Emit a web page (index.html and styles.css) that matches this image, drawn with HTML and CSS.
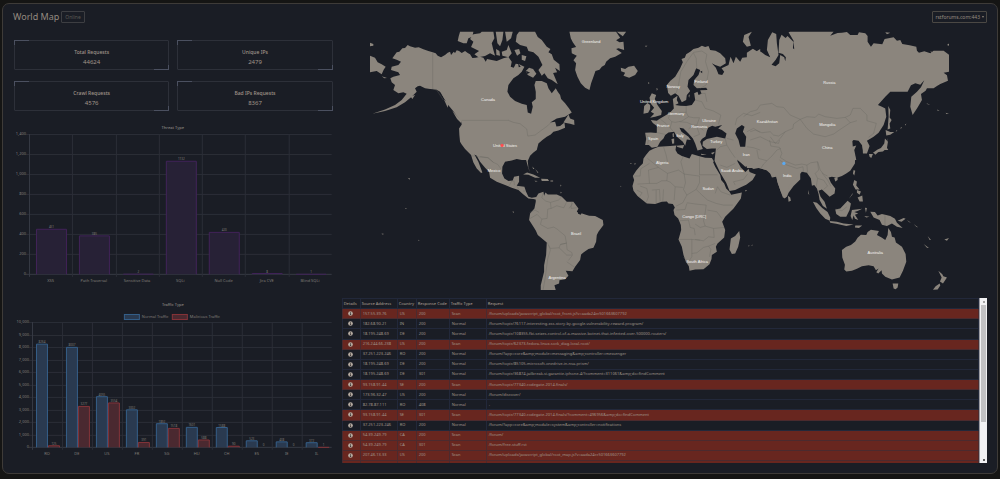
FILE: index.html
```html
<!DOCTYPE html>
<html lang="en">
<head>
<meta charset="utf-8">
<title>World Map</title>
<meta name="viewport" content="width=device-width, initial-scale=1">
<link rel="stylesheet" href="styles.css">
<script src="charts.js" defer></script>
</head>
<body>
<svg class="sprite" aria-hidden="true">
  <symbol id="info" viewBox="0 0 16 16"><circle cx="8" cy="8" r="7.5" fill="currentColor"/><path class="info-mark" d="M6.4 7H9v4.2h1.2v1.5H6v-1.5h1V8.4H6.400zM7 3.300h2.200v2.200H7z"/></symbol>
</svg>
<main class="panel">
  <header class="header">
    <h1 class="title">World Map</h1>
    <span class="status">Online</span>
    <button class="host" type="button" aria-haspopup="listbox">rstforums.com:443<span class="caret" aria-hidden="true"></span></button>
  </header>
  <div class="layout">
    <div class="left">
      <section class="stats">
        <article class="stat"><h2 class="stat-name">Total Requests</h2><p class="stat-value">44624</p></article>
        <article class="stat"><h2 class="stat-name">Unique IPs</h2><p class="stat-value">2479</p></article>
        <article class="stat"><h2 class="stat-name">Crawl Requests</h2><p class="stat-value">4576</p></article>
        <article class="stat"><h2 class="stat-name">Bad IPs Requests</h2><p class="stat-value">8367</p></article>
      </section>
      <svg class="chart" id="threat-chart" viewBox="0 0 323 175" role="img" aria-label="Threat Type"></svg>
      <svg class="chart" id="traffic-chart" viewBox="0 0 323 175" role="img" aria-label="Traffic Type"></svg>
    </div>
    <div class="right">
      <svg class="map" viewBox="1110 93 1737 777" role="img" aria-label="Requests by country">
        <g class="land">
          <g transform="translate(1095 75)">
            <path d="M82,100L95,82 103,80 112,70 120,69 128,60 135,64 150,68 161,67 175,73 190,78 203,82 212,85 218,92 228,97 240,90 248,83 255,80 258,90 266,80 270,84 275,76 282,78 290,84 300,78 308,84 315,88 322,99 332,98 345,95 355,98 362,110 366,102 380,105 395,108 415,100 430,96 440,110 437,125 446,128 452,116 462,118 478,125 470,140 460,150 445,160 430,180 427,200 435,215 450,228 470,236 485,240 488,262 498,266 503,245 500,232 512,222 512,200 508,180 512,168 530,168 545,175 550,190 560,205 572,190 578,200 585,210 588,222 600,235 612,250 620,262 600,275 575,280 555,292 570,290 574,304 585,303 598,292 600,308 580,316 565,320 557,328 545,335 532,345 520,355 515,375 505,382 495,392 488,408 490,428 496,443 490,430 483,405 470,405 455,402 440,406 420,410 412,425 411,445 418,460 430,468 443,466 447,455 462,452 462,470 455,482 478,485 483,500 490,515 500,518 514,516 514,524 505,522 490,520 475,508 460,495 440,488 420,480 395,470 375,458 372,440 360,428 345,410 335,392 328,388 340,410 352,442 348,444 335,430 325,412 318,390 300,372 290,358 285,350 283,330 282,310 290,298 288,288 275,272 262,255 245,235 235,215 225,200 215,194 205,193 195,192 180,190 165,182 158,184 150,190 155,200 140,215 120,232 95,247 60,258 22,266 60,253 90,240 110,225 125,206 115,202 100,205 85,195 90,180 80,172 76,160 85,155 105,150 100,142 78,135 80,125 100,120 108,110 95,104Z"/>
            <path d="M285,20L325,20 322,35 310,40 305,55 295,55 278,48 281,34ZM325,28L345,25 350,20 385,20 388,40 380,55 385,75 390,92 375,85 360,93 340,97 328,88 342,78 330,72 318,66 325,50 315,42ZM392,20L415,20 412,45 405,64 397,55ZM420,20L443,20 438,40 425,50ZM410,80L425,75 430,60 440,85 430,97 412,92ZM393,72L403,78 405,92 394,90ZM462,20L510,20 518,36 530,45 545,65 556,72 550,82 560,88 566,104 583,118 584,138 570,128 576,142 564,144 578,178 560,165 548,160 538,145 530,152 520,135 532,120 520,95 505,82 490,78 485,65 465,60 452,50 455,30ZM482,138L492,128 504,132 514,146 504,158 488,150ZM448,75L462,72 466,85 456,92ZM470,90L484,94 480,108 470,104Z"/>
            <path d="M15,92L30,98 38,112 50,118 62,125 56,134 50,148 35,138 15,142ZM15,53L25,57 25,62 15,64ZM50,154L66,159 58,160ZM136,214L150,210 142,222ZM228,204L242,218 238,222ZM236,222L250,236 248,248ZM262,258L290,286 288,294 276,282Z"/>
          </g>
          <g transform="translate(1095 465)">
            <path d="M512,128L520,115 535,110 537,122 541,112 548,118 575,118 590,125 605,140 625,140 640,160 635,170 660,178 672,182 690,183 713,195 715,210 700,230 695,240 693,260 685,278 670,282 655,292 648,298 645,315 630,335 622,348 602,347 610,362 600,372 583,375 582,385 568,390 572,405 527,405 527,390 531,374 537,350 537,330 543,300 545,262 518,240 512,226 505,215 492,195 495,175 508,160 512,140Z"/>
            <path d="M474,58L486,52 505,58 525,68 510,68 490,59ZM528,71L548,72 552,78 530,78ZM508,77L518,78 512,80ZM556,76L564,76 564,79 556,79ZM128,68L135,70 134,74ZM442,169L447,170 445,174ZM50,235L58,237 51,238ZM160,254L164,256 160,257ZM120,159L126,160 122,162ZM502,34L508,42 504,42ZM510,42L520,52 518,54ZM586,88L589,92 586,94ZM586,110L590,112 587,115Z"/>
          </g>
          <g transform="translate(1680 75)">
            <path d="M28,20L168,20 180,38 168,46 178,52 190,50 192,75 175,70 168,72 185,84 165,95 150,100 138,110 134,120 125,125 118,134 106,138 100,155 93,175 88,195 75,188 62,175 52,155 45,135 48,115 40,106 50,92 35,85 34,70 48,66 38,52 32,40ZM170,20L198,20 188,34ZM182,128L195,132 205,125 222,122 233,138 225,150 207,158 190,152 195,143 183,139ZM10,292L25,268 30,280 42,285 43,300 30,296ZM255,62L262,62 257,66ZM264,171L268,174 265,178ZM289,188L293,192 290,197Z"/>
            <path d="M275,205L288,210 284,222 292,240 305,258 303,270 285,275 270,278 282,266 272,260 282,248 272,236 268,218ZM252,243L262,234 270,240 270,252 264,263 250,266Z"/>
            <path d="M255,323L272,322 290,324 290,303 278,294 272,285 290,287 300,280 318,270 330,262 341,250 338,222 352,212 350,225 355,235 345,240 360,242 378,243 395,240 405,225 402,205 412,200 415,210 424,206 420,196 442,195 438,188 410,190 400,180 402,165 415,150 420,135 408,130 400,150 385,165 382,185 390,198 380,210 378,225 365,232 355,212 345,205 332,212 324,204 320,180 330,168 345,155 360,130 368,112 364,102 374,98 378,88 390,80 400,72 415,68 425,62 435,66 445,63 450,75 466,77 480,85 495,100 497,115 480,125 465,120 455,115 467,128 475,148 486,150 492,140 484,130 505,120 511,95 520,115 527,95 540,110 546,98 560,97 575,88 600,72 600,370 468,370 455,370 440,372 427,362 428,350 440,342 470,335 495,340 499,325 485,315 474,310 486,300 465,305 456,302 444,308 440,318 436,334 425,342 420,350 428,372 412,376 405,355 398,340 385,325 370,310 358,308 364,320 385,335 392,345 380,343 375,362 368,350 350,335 342,320 325,322 315,330 310,340 300,350 292,365 275,368 266,360 255,360 258,342Z"/>
            <path d="M348,362L372,360 368,370 352,366ZM334,342L342,340 342,355 336,356ZM337,326L341,324 341,336 338,336ZM422,386L440,388 424,390ZM452,384L464,380 458,388ZM552,30L575,20 565,36 572,62 560,65 548,50ZM385,212L389,208 387,218Z"/>
          </g>
          <g transform="translate(1860 450)">
            <path d="M78,14L88,2 100,-4 115,-10 150,-12 168,-14 166,0 172,10 185,18 208,25 215,12 235,18 255,23 275,24 282,35 278,34 285,50 300,75 303,90 312,100 318,115 328,125 333,134 365,127 362,145 340,175 315,200 306,215 315,240 312,262 292,280 287,290 290,305 275,315 274,327 268,342 250,357 225,358 208,362 206,348 197,335 190,315 185,290 175,268 183,240 182,225 174,205 163,195 160,180 164,172 158,162 145,160 140,154 125,155 105,162 80,160 65,148 52,138 40,122 37,108 42,90 38,78 48,62 60,48 68,40 70,25Z"/>
            <path d="M357,243L360,262 354,290 345,310 335,312 328,298 332,265 345,258Z"/>
            <path d="M283,32L288,-12 350,-12 352,34 362,52 376,66 385,56 388,66 407,73 397,90 378,104 360,112 345,120 328,123 318,98 300,68Z"/>
            <path d="M345,-12L540,-12 540,88 520,108 505,128 500,140 492,145 482,125 472,98 468,80 455,82 450,70 438,60 415,54 400,57 385,48 375,50 362,38 350,28ZM503,137L510,142 512,152 505,155ZM375,120L381,121 376,124ZM384,286L389,287 385,289ZM394,285L398,284 395,288ZM30,39L36,42 31,42ZM42,40L48,40 44,44ZM1,107L4,109 1,110Z"/>
          </g>
          <g transform="translate(2250 0)">
            <path d="M-10,158L8,146 20,154 32,155 45,165 60,172 50,150 53,120 66,97 78,102 80,130 85,165 76,180 64,194 76,199 87,190 90,165 102,172 105,184 107,172 98,162 85,158 87,120 94,104 106,114 112,108 130,126 128,145 132,148 130,122 115,97 120,95 250,95 240,107 262,99 275,98 290,96 300,105 322,105 326,97 345,100 352,108 352,125 362,140 370,130 396,133 403,117 430,112 440,122 450,120 456,132 478,136 498,140 500,152 506,158 522,154 540,160 550,152 580,152 597,165 597,215 580,218 590,226 593,242 570,252 560,258 550,265 530,265 526,272 512,282 515,300 500,325 487,345 480,320 483,290 500,275 512,262 522,241 510,254 495,250 482,256 472,275 420,275 405,290 383,315 395,320 405,325 408,350 400,375 385,398 370,410 350,422 358,438 350,460 338,460 337,438 325,422 310,420 297,430 305,440 318,436 312,450 318,480 -10,480ZM414,318L420,330 418,352 424,360 418,370 420,385 412,388 415,350ZM406,390L420,396 432,396 420,404 408,406ZM405,97L420,98 410,103ZM426,118L440,122 432,126ZM590,135L597,130 597,138ZM540,154L552,158 551,168ZM412,414L408,440 414,450 402,450ZM436,394L440,390 441,393ZM450,384L456,380 452,386ZM464,374L468,370 466,376ZM528,309L540,315 532,313ZM560,328L568,332 562,332ZM586,338L597,342 588,342Z"/>
          </g>
          <g transform="translate(2220 420)">
            <path d="M20,84L20,0 336,0 338,24 332,32 345,50 344,70 330,92 318,100 305,108 290,113 275,110 265,112 272,128 285,145 283,160 268,170 258,160 245,148 235,152 241,170 253,185 260,206 248,198 238,180 235,162 230,145 222,135 215,137 212,115 200,98 185,95 170,112 155,126 145,140 142,160 135,174 128,172 120,150 112,125 108,106 98,110 85,92 60,84ZM365,0L380,4 382,30 370,38 366,20ZM434,-5L443,5 440,24 428,34 415,36 405,42 398,38 412,28 422,24 432,10ZM386,42L398,42 393,54 388,50ZM400,38L412,38 405,44ZM340,90L345,92 342,106 338,100ZM282,114L292,111 292,120 285,124ZM342,120L350,124 348,136 358,148 346,148 338,134ZM350,150L362,154 358,164 350,158ZM352,172L366,166 368,184 358,184ZM338,158L326,176 336,164Z"/>
            <path d="M218,185L230,188 246,204 262,216 270,232 269,242 255,236 240,220 228,204ZM268,243L290,245 310,250 340,253 318,258 288,251 270,248ZM345,256L366,256 356,264 344,262ZM285,208L300,205 322,182 332,190 328,210 318,230 300,230 288,222ZM335,210L366,206 352,213 342,216 354,220 344,224 354,240 344,236 340,226 336,240 331,228ZM374,203L380,204 377,218ZM372,228L388,230 378,232ZM390,215L404,216 412,226 425,222 450,228 464,236 470,248 487,264 470,260 455,250 440,258 425,254 418,240 400,232ZM472,242L490,234 496,236 484,245ZM500,240L512,248 506,246ZM520,252L534,262 528,260ZM550,312L566,324 560,323ZM612,298L626,294 620,302ZM562,288L572,300 568,300ZM205,150L207,165 204,160Z"/>
            <path d="M305,330L318,320 332,315 345,304 352,293 362,284 378,285 382,276 392,269 416,273 410,285 424,292 435,300 442,285 444,264 452,276 455,290 463,292 467,307 485,320 496,342 498,365 488,392 478,412 455,418 435,410 425,400 424,390 414,400 408,396 415,385 407,390 400,378 385,375 365,378 350,386 335,392 318,394 312,388 314,374 306,352ZM457,430L474,430 472,442 466,447 460,445ZM594,392L606,402 609,408 620,412 608,430 599,424 604,412ZM598,430L600,436 592,448 578,449 586,438Z"/>
          </g>
        </g>
        <g class="water">
          <path d="M2210,385L2225,375 2233,380 2228,395 2238,410 2235,440 2220,440 2215,420 2205,400ZM1588,316L1596,316 1582,327ZM1554,190L1562,200 1556,202ZM1578,212L1590,218 1580,222ZM2100,215L2106,212 2106,220ZM1732,633L1746,636 1742,644 1734,641Z"/>
        </g>
        <g class="borders">
          <path transform="translate(1095 75)" d="M203,82V192L215,195 235,225M290,286H430L445,292 465,296 485,312 488,333 510,330 530,315 548,302 560,290M320,392L345,396 368,398 385,412"/>
          <path transform="translate(1095 465)" d="M345,4L370,8 385,22 398,28 408,42M432,92L440,78 447,78 448,90M455,92L462,104M474,108L482,108M535,112L530,128 542,138 556,142 558,160 548,162 546,190 530,192 526,208 548,220 566,216 576,222 600,242 604,264 586,268 582,278 556,280 546,262M495,190L516,178 530,192M494,172L510,165 522,172M556,142L580,135 590,125M558,160L575,152 596,158 604,142M612,160L625,142M620,140L618,160 635,158M586,268L604,264 606,284 620,292 622,300 610,316M582,278L605,300 620,300M605,320L628,336M550,270L556,285 548,310 544,340 540,370 534,404"/>
          <path transform="translate(1680 75)" d="M348,205L355,180 362,140 380,110 400,82 425,78M410,130L408,100 400,84M425,78L440,88 436,110 445,140 438,180 420,190M378,242L378,262 385,275 400,278 418,278M330,262L325,280 335,290 330,308M300,282L318,296 330,308 340,320M258,328L266,340 262,358M288,322L315,328M405,225L425,230 435,250 460,258 482,270 475,298M420,205L435,205 440,230M385,275L365,288 345,292 335,290M378,262L358,262M358,290L380,292 398,300 408,300M398,300L385,312M418,278L410,300 430,316M408,300L418,328 400,335M525,300L530,280 550,265 575,272 600,262M500,340L520,345M560,320L580,310 600,322M560,365L580,368 600,375M495,340L500,360 480,365 470,375M500,360L512,380 525,398"/>
          <path transform="translate(1860 450)" d="M130,-10L138,15 142,35M82,25L115,52 142,70M115,52L85,60 88,100 52,102M40,78L60,78 62,56 88,40M142,70L175,60 192,72 238,78M190,18L182,35 192,72M238,20V74H292M238,78V98L228,118M142,70L140,92 150,96 165,110 162,150M192,72L196,98 190,118 200,135M88,100L110,100 125,92 140,92M60,108L80,115 85,140 78,158M95,120L118,118 120,154M108,120L108,160M130,118L128,154M50,120L66,128 58,140M165,110L188,112M168,168L188,158 200,135 228,118 240,130 262,150 288,160 310,165 338,165M200,158L228,162 258,165M168,180L195,178 200,160M178,212L205,210 210,232 222,235 225,255M258,165L255,188 250,212 255,228 240,232 225,222M262,180L290,185 305,205M255,228L280,235 312,232M280,235L282,262 265,260 250,272 225,268M176,268H215L240,270M215,268V320L205,335 190,322M215,310L230,308 250,292 265,288 272,298 268,320M265,288L285,280M292,110L302,125 330,135M285,130L292,110M300,45L320,52 345,40M345,105L340,95 370,88 382,72"/>
          <path transform="translate(2250 0)" d="M-20,350L0,335 20,330 30,315 65,310 80,320 100,322 120,345 150,358 130,372 128,385 105,395 85,408 70,405 60,395 35,398 15,390 0,395M150,358L170,350 195,352 205,342 225,350 260,355 285,352 300,368 285,378 270,388 250,402 225,410 190,402 170,385 150,358M285,352L300,345 308,325 330,325 350,345 350,362 378,370 370,400M300,368L320,362M355,412L372,398M60,410L75,430 90,415 105,395M0,420L30,410 60,425 85,430 88,420"/>
          <path transform="translate(2220 420)" d="M50,30L55,55 80,62 95,48 110,30 122,25M60,88L70,72 80,62M88,0L92,18 118,22 125,40 120,52 140,65 165,75 185,72 200,75M118,60L140,75 170,85 188,80M188,80L190,96M200,75L212,68 232,65 235,90 225,100 232,115M232,65L240,90 250,102 262,108M232,115L228,140M232,115L250,120 262,138 250,148M245,98L262,120 272,138M200,75L202,98M286,207L305,212 320,200M434,226V256"/>
        </g>
        <g class="places" transform="scale(3)">
          <text x="591" y="43">Greenland</text><text x="488" y="101">Canada</text><text x="505" y="147">United States</text><text x="494" y="172">Mexico</text>
          <text x="576" y="235">Brazil</text><text x="557" y="279">Argentina</text><text x="673" y="88">Norway</text><text x="701" y="83">Finland</text>
          <text x="654" y="103">United Kingdom</text><text x="676" y="115">Germany</text><text x="663" y="127">France</text><text x="709" y="122">Ukraine</text>
          <text x="699" y="128">Romania</text><text x="653" y="140">Spain</text><text x="680" y="137">Italy</text><text x="716" y="143">Turkey</text>
          <text x="662" y="164">Algeria</text><text x="746" y="156">Iran</text><text x="732" y="172">Saudi Arabia</text><text x="708" y="190">Sudan</text>
          <text x="694" y="218">Congo [DRC]</text><text x="697" y="263">South Africa</text><text x="767" y="123">Kazakhstan</text><text x="827" y="126">Mongolia</text>
          <text x="827" y="149">China</text><text x="787" y="177">India</text><text x="829" y="84">Russia</text><text x="875" y="254">Australia</text>
        </g>
        <circle class="hit-scan" cx="1506" cy="436" r="5"/>
        <circle class="hit-normal" cx="2351" cy="490" r="5"/>
      </svg>
      <section class="log">
        <div class="log-view">
        <table class="requests">
          <colgroup><col class="c-details"><col class="c-source"><col class="c-country"><col class="c-code"><col class="c-type"><col></colgroup>
          <thead><tr><th>Details</th><th>Source Address</th><th>Country</th><th>Response Code</th><th>Traffic Type</th><th>Request</th></tr></thead>
          <tbody>
          <tr class="scan"><td><svg class="info"><use href="#info"/></svg></td><td>157.55.39.76</td><td>US</td><td>200</td><td>Scan</td><td>/forum/uploads/javascript_global/root_front.js?v=aada24cc501663607792</td></tr>
          <tr><td><svg class="info"><use href="#info"/></svg></td><td>182.68.90.21</td><td>IN</td><td>200</td><td>Normal</td><td>/forum/topic/76117-interesting-xss-story-by-google-vulnerability-reward-program/</td></tr>
          <tr><td><svg class="info"><use href="#info"/></svg></td><td>18.195.248.69</td><td>DE</td><td>200</td><td>Normal</td><td>/forum/topic/108355-fbi-seizes-control-of-a-massive-botnet-that-infected-over-500000-routers/</td></tr>
          <tr class="scan"><td><svg class="info"><use href="#info"/></svg></td><td>216.244.66.238</td><td>US</td><td>200</td><td>Scan</td><td>/forum/topic/62373-fedora-linux-sock_diag-local-root/</td></tr>
          <tr><td><svg class="info"><use href="#info"/></svg></td><td>37.251.223.246</td><td>RO</td><td>200</td><td>Normal</td><td>/forum/?app=core&amp;amp;module=messaging&amp;amp;controller=messenger</td></tr>
          <tr><td><svg class="info"><use href="#info"/></svg></td><td>18.195.248.69</td><td>DE</td><td>200</td><td>Normal</td><td>/forum/topic/85105-microsoft-onedrive-in-nsa-prism/</td></tr>
          <tr><td><svg class="info"><use href="#info"/></svg></td><td>18.195.248.69</td><td>DE</td><td>301</td><td>Normal</td><td>/forum/topic/36874-jailbreak-si-garantie-iphone-4/?comment=311061&amp;amp;do=findComment</td></tr>
          <tr class="scan"><td><svg class="info"><use href="#info"/></svg></td><td>93.158.91.44</td><td>SE</td><td>200</td><td>Scan</td><td>/forum/topic/77340-codegate-2014-finals/</td></tr>
          <tr><td><svg class="info"><use href="#info"/></svg></td><td>173.96.32.47</td><td>US</td><td>200</td><td>Normal</td><td>/forum/discover/</td></tr>
          <tr><td><svg class="info"><use href="#info"/></svg></td><td>82.78.87.111</td><td>RO</td><td>408</td><td>Normal</td><td>-</td></tr>
          <tr class="scan"><td><svg class="info"><use href="#info"/></svg></td><td>93.158.91.44</td><td>SE</td><td>301</td><td>Scan</td><td>/forum/topic/77340-codegate-2014-finals/?comment=496956&amp;amp;do=findComment</td></tr>
          <tr><td><svg class="info"><use href="#info"/></svg></td><td>37.251.223.246</td><td>RO</td><td>200</td><td>Normal</td><td>/forum/?app=core&amp;amp;module=system&amp;amp;controller=notifications</td></tr>
          <tr class="scan"><td><svg class="info"><use href="#info"/></svg></td><td>54.39.249.79</td><td>CA</td><td>200</td><td>Scan</td><td>/forum/</td></tr>
          <tr class="scan"><td><svg class="info"><use href="#info"/></svg></td><td>54.39.249.79</td><td>CA</td><td>301</td><td>Scan</td><td>/forum/free-stuff.rst</td></tr>
          <tr class="scan"><td><svg class="info"><use href="#info"/></svg></td><td>207.46.13.33</td><td>US</td><td>200</td><td>Scan</td><td>/forum/uploads/javascript_global/root_map.js?v=aada24cc501663607792</td></tr>
          <tr class="scan"><td></td><td></td><td></td><td></td><td></td><td></td></tr>
          </tbody>
        </table>
        </div>
        <div class="scrollbar" aria-hidden="true"><span class="arrow up"></span><span class="thumb"></span><span class="arrow down"></span></div>
      </section>
    </div>
  </div>
</main>
</body>
</html>
```
FILE: styles.css
```css
* { box-sizing: border-box; }
body {
  margin: 0;
  padding: 3px 2px 5px;
  background: #151514;
  color: #a0958a;
  font-family: "Noto Sans", "Open Sans", sans-serif;
  font-size: 4px;
}
h1, h2, p { margin: 0; font-weight: 400; }
.sprite { display: block; width: 0; height: 0; }
.panel {
  padding: 7px 10px 3px;
  border: 1px solid #3e3b38;
  border-radius: 7px;
  background: #1a1d25;
}
.header { display: flex; align-items: center; gap: 2px; height: 12px; }
.title { font-size: 9px; line-height: 12px; color: #948a80; }
.status {
  padding: 0 3px;
  border: 1px solid #3d3e42;
  border-radius: 1px;
  font-size: 5px;
  line-height: 10px;
  color: #5c5a55;
}
.host {
  display: flex;
  align-items: center;
  gap: 2px;
  height: 12px;
  margin-left: auto;
  padding: 0 2px;
  border: 1px solid #4b4844;
  border-radius: 1px;
  background: transparent;
  color: #968b80;
  font: 5px/10px "Noto Sans", sans-serif;
}
.caret { border: 1px solid transparent; border-top: 2px solid #8e8478; border-bottom: 0; }
.layout {
  display: grid;
  grid-template-columns: minmax(0, 1fr) minmax(0, 2fr);
  gap: 6px;
  padding-top: 8px;
}
.left { padding-top: 9px; }
.stats {
  display: grid;
  grid-template-columns: 1fr 1fr;
  gap: 11px 8px;
  margin-bottom: 9px;
  padding: 0 3px 0 1px;
}
.stat {
  position: relative;
  height: 30px;
  padding-top: 7px;
  border: 1px solid #2d3039;
  border-radius: 1px;
  text-align: center;
}
.stat::before, .stat::after {
  content: "";
  position: absolute;
  width: 14px;
  height: 4px;
  border: 0 solid #4b5060;
}
.stat::before { top: -1px; left: -1px; border-width: 1px 0 0 1px; }
.stat::after { right: -1px; bottom: -1px; border-width: 0 1px 1px 0; }
.stat-name { font-size: 5px; line-height: 8px; font-weight: 500; }
.stat-value { font-size: 6px; line-height: 13px; }
.chart { display: block; width: 100%; height: auto; font-size: 4px; }
.chart text { fill: #807d79; text-anchor: middle; }
.chart .tick { text-anchor: end; }
.chart .legend { text-anchor: start; }
.chart .value { font-size: 3px; }
.chart .heading { fill: #8a8681; font-weight: 500; }
.grid { stroke: #2b2e37; fill: none; }
.axis { stroke: #373a44; fill: none; }
.bar { stroke-width: 1; }
.purple { fill: #272136; stroke: #412359; }
.blue { fill: #2a3a50; stroke: #355f8a; }
.red { fill: #4a2930; stroke: #853439; }
.map { display: block; width: auto; height: auto; margin: 0 38px 8px 28px; }
.land { fill: #8b857d; }
.water { fill: #1a1d25; }
.borders { fill: none; stroke: #64655f; stroke-width: 1; stroke-linejoin: round; }
.places {
  fill: #f6f5f3;
  font-family: "Liberation Sans", Arial, sans-serif;
  font-size: 4px;
  text-anchor: middle;
}
.hit-scan { fill: #ff4d4f; }
.hit-normal { fill: #5aa9f2; }
.log { display: flex; height: 165px; }
.log-view { flex: 1; min-width: 0; overflow: hidden; }
.requests {
  width: 100%;
  height: 173px;
  border-collapse: collapse;
  table-layout: fixed;
  line-height: 6px;
}
.c-details { width: 18px; }
.c-source { width: 37px; }
.c-country { width: 19px; }
.c-code { width: 33px; }
.c-type { width: 37px; }
.requests th, .requests td {
  height: 10px;
  padding: 0 2px;
  border: 1px solid #22283a;
  text-align: left;
  font-weight: 400;
  white-space: nowrap;
}
.requests th { font-weight: 500; padding: 0 1px; }
.requests td:first-child { padding: 0 3px 0 1px; }
.requests .scan { background: #68261f; }
.requests .scan td { border-color: #4b2a2e; }
.info { display: block; width: 5px; height: 5px; margin: 0 auto; color: #b5aaa0; }
.info-mark { fill: #2b2725; }
.scrollbar {
  display: flex;
  flex-direction: column;
  width: 8px;
  padding: 0 1px;
  background: #f1f1f3;
  border-left: 1px solid #9a9aa0;
}
.thumb { height: 117px; background: #c1c1c3; }
.arrow { width: 2px; height: 2px; margin: 3px auto 2px; background: #a3a3a3; }
.down { margin-top: auto; background: #606060; }
```
FILE: charts.js
```js
const NS = "http://www.w3.org/2000/svg";

function add(svg, tag, attrs, text) {
  const el = document.createElementNS(NS, tag);
  for (const key in attrs) el.setAttribute(key, attrs[key]);
  if (text !== undefined) el.textContent = text;
  svg.appendChild(el);
}

function drawChart(id, o) {
  const svg = document.getElementById(id);
  const bottom = o.top + o.height;
  const step = (o.right - o.left) / o.labels.length;
  add(svg, "text", { x: 160, y: o.titleY, class: "heading" }, o.title);
  for (let i = 0; i <= o.ticks; i++) {
    const y = Math.round(o.top + o.height * i / o.ticks) + 0.5;
    add(svg, "path", { d: `M${o.left - 3} ${y}H${o.right}`, class: i === o.ticks ? "axis" : "grid" });
    add(svg, "text", { x: o.left - 3, y: y + 1, class: "tick" }, (o.max - o.max * i / o.ticks).toLocaleString("en-US"));
  }
  o.labels.forEach((label, i) => {
    const x = Math.round(o.left + i * step) + 0.5;
    add(svg, "path", { d: `M${x} ${o.top}V${bottom + 3}`, class: i ? "grid" : "axis" });
    add(svg, "text", { x: o.left + (i + 0.5) * step, y: bottom + 8, class: "label" }, label);
  });
  o.series.forEach((s, n) => {
    s.values.forEach((v, i) => {
      const h = v / o.max * o.height;
      const x = Math.round(o.left + i * step + o.inset + n * o.bar) + 0.5;
      const y = bottom - h + 0.5;
      if (v) add(svg, "path", { d: `M${x} ${bottom + 0.5}V${y}h${o.bar - 1}V${bottom + 0.5}`, class: "bar " + s.color });
      add(svg, "text", { x: x + (o.bar - 1) / 2, y: y - 1, class: "value" }, v);
    });
    if (s.name) {
      add(svg, "rect", { x: s.keyX + 0.5, y: 19.5, width: 15, height: 5, class: s.color });
      add(svg, "text", { x: s.keyX + 18, y: 23, class: "legend" }, s.name);
    }
  });
}

drawChart("threat-chart", {
  title: "Threat Type", titleY: 9, left: 16, right: 319, top: 14, height: 140,
  max: 1400, ticks: 7, bar: 31, inset: 7,
  labels: ["XSS", "Path Traversal", "Sensitive Data", "SQLi", "Null Code", "Jira CVE", "Blind SQLi"],
  series: [{ color: "purple", values: [451, 385, 2, 1132, 420, 8, 1] }]
});

drawChart("traffic-chart", {
  title: "Traffic Type", titleY: 11, left: 19, right: 319, top: 27, height: 125,
  max: 10000, ticks: 10, bar: 12, inset: 4,
  labels: ["RO", "DE", "US", "FR", "SG", "HU", "CH", "ES", "IE", "IL"],
  series: [
    { name: "Normal Traffic", color: "blue", keyX: 111, values: [8264, 8007, 4055, 3002, 1892, 1601, 1588, 523, 438, 372] },
    { name: "Malicious Traffic", color: "red", keyX: 159, values: [125, 3277, 3554, 391, 1518, 588, 90, 0, 0, 1] }
  ]
});
```
